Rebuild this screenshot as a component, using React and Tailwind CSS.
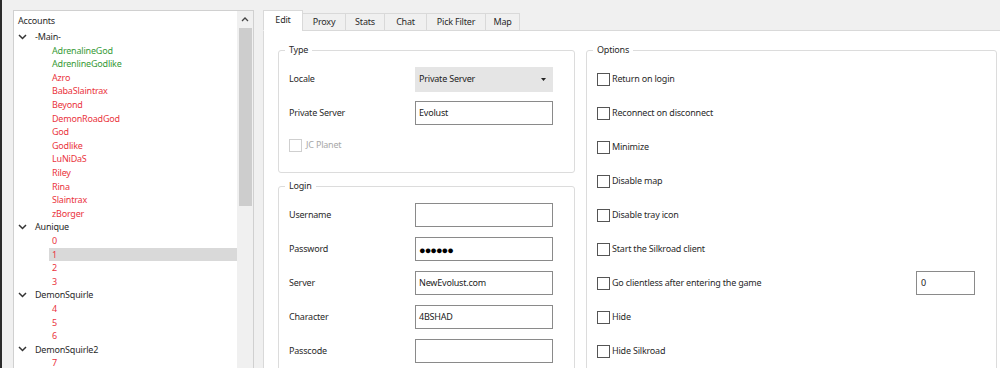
import React from "react";

const tree = [
  { type: "group", label: "-Main-" },
  { label: "AdrenalineGod", c: "g" },
  { label: "AdrenlineGodlike", c: "g" },
  { label: "Azro" },
  { label: "BabaSlaintrax" },
  { label: "Beyond" },
  { label: "DemonRoadGod" },
  { label: "God" },
  { label: "Godlike" },
  { label: "LuNiDaS" },
  { label: "Riley" },
  { label: "Rina" },
  { label: "Slaintrax" },
  { label: "zBorger" },
  { type: "group", label: "Aunique" },
  { label: "0" },
  { label: "1", sel: true },
  { label: "2" },
  { label: "3" },
  { type: "group", label: "DemonSquirle" },
  { label: "4" },
  { label: "5" },
  { label: "6" },
  { type: "group", label: "DemonSquirle2" },
  { label: "7" },
];

const tabs = [
  { label: "Edit", w: "w-[40px]", sel: true },
  { label: "Proxy", w: "w-[44px]" },
  { label: "Stats", w: "w-[40px]" },
  { label: "Chat", w: "w-[43px]" },
  { label: "Pick Filter", w: "w-[60px]" },
  { label: "Map", w: "w-[35px]" },
];

const options = [
  "Return on login",
  "Reconnect on disconnect",
  "Minimize",
  "Disable map",
  "Disable tray icon",
  "Start the Silkroad client",
  "Go clientless after entering the game",
  "Hide",
  "Hide Silkroad",
];

function Chevron() {
  return (
    <svg width="9" height="6" viewBox="0 0 9 6" className="block">
      <path d="M1 1 L4.5 4.5 L8 1" fill="none" stroke="#333" strokeWidth="1.5" />
    </svg>
  );
}

function Box({ disabled }) {
  return (
    <span
      className={
        "inline-block w-[13px] h-[13px] border bg-white shrink-0 " +
        (disabled ? "border-[#cfcfcf]" : "border-[#555]")
      }
    />
  );
}

function Input({ value, password }) {
  return (
    <div className="w-[138px] h-[24px] border border-[#8a8a8a] bg-white flex items-center px-[3px] text-[#222]">
      {password ? (
        <span className="text-[11px] tracking-[-1px] leading-none text-black">●●●●●●</span>
      ) : (
        value
      )}
    </div>
  );
}

function Group({ title, children, className = "" }) {
  return (
    <fieldset className={"border border-[#dcdcdc] rounded-[3px] px-[10px] " + className}>
      <legend className="-ml-[4px] px-[4px] leading-[14px] text-[#2a2a2a]">{title}</legend>
      {children}
    </fieldset>
  );
}

function Row({ label, children }) {
  return (
    <div className="flex items-center h-[34px]">
      <div className="w-[126px] text-[#2a2a2a]">{label}</div>
      {children}
    </div>
  );
}

export default function App() {
  return (
    <div className="flex w-[1000px] h-[368px] overflow-hidden bg-[#f0f0f0] font-['Noto_Sans',sans-serif] text-[9px] tracking-[-0.2px] text-[#2a2a2a]">
      <div className="w-[2px] bg-[#2b2b2b] shrink-0" />
      {/* Accounts */}
      <div className="w-[261px] shrink-0 pl-[11px] pr-[9px] pt-[10px]">
        <div className="flex h-[400px] border border-[#d0d0d0] bg-white">
          <div className="flex-1 flex flex-col">
            <div className="h-[19px] pl-[4px] flex items-center">Accounts</div>
            {tree.map((r, i) =>
              r.type === "group" ? (
                <div key={i} className="h-[13.6px] flex items-center">
                  <span className="w-[21px] pl-[4px] flex items-center">
                    <Chevron />
                  </span>
                  <span>{r.label}</span>
                </div>
              ) : (
                <div key={i} className="h-[13.6px] flex items-center pl-[35px]">
                  <span
                    className={
                      "flex-1 h-full flex items-center pl-[3px] " +
                      (r.sel ? "bg-[#d9d9d9] " : "") +
                      (r.c === "g" ? "text-[#379a37]" : "text-[#ea3440]")
                    }
                  >
                    {r.label}
                  </span>
                </div>
              )
            )}
          </div>
          <div className="w-[16px] bg-[#f0f0f0] flex flex-col items-center">
            <div className="h-[17px] flex items-center justify-center">
              <svg width="8" height="5" viewBox="0 0 8 5">
                <path d="M1 4 L4 1 L7 4" fill="none" stroke="#444" strokeWidth="1.3" />
              </svg>
            </div>
            <div className="w-[13px] h-[178px] bg-[#cdcdcd]" />
          </div>
        </div>
      </div>
      {/* Right side */}
      <div className="flex-1 flex flex-col pt-[10px]">
        <div className="flex items-end h-[21px] relative z-10">
          {tabs.map((t, i) => (
            <div
              key={t.label}
              className={
                t.w +
                " flex items-center justify-center border border-[#d9d9d9] " +
                (i > 0 ? "-ml-px " : "") +
                (t.sel ? "h-[21px] bg-white border-b-white pb-[2px]" : "h-[18px] bg-[#f0f0f0] border-b-[#d9d9d9]")
              }
            >
              {t.label}
            </div>
          ))}
        </div>
        <div className="flex-1 -mt-px bg-white border-t border-l border-[#d9d9d9] flex gap-[11px] pl-[14px] pt-[12px]">
          <div className="w-[297px] flex flex-col gap-[6px]">
            <Group title="Type" className="pt-[5px] pb-[12px]">
              <Row label="Locale">
                <div className="w-[138px] h-[25px] bg-[#e5e5e5] flex items-center pl-[4px] pr-[7px] text-[#222]">
                  <span className="flex-1">Private Server</span>
                  <svg width="5" height="3" viewBox="0 0 5 3">
                    <path d="M0 0 L5 0 L2.5 3 Z" fill="#222" />
                  </svg>
                </div>
              </Row>
              <Row label="Private Server">
                <Input value="Evolust" />
              </Row>
              <div className="flex items-center h-[30px] gap-[4px] text-[#a8a8a8]">
                <Box disabled />
                <span>JC Planet</span>
              </div>
            </Group>
            <Group title="Login" className="pt-[5px] pb-[5px]">
              <Row label="Username">
                <Input value="" />
              </Row>
              <Row label="Password">
                <Input password />
              </Row>
              <Row label="Server">
                <Input value="NewEvolust.com" />
              </Row>
              <Row label="Character">
                <Input value="4BSHAD" />
              </Row>
              <Row label="Passcode">
                <Input value="" />
              </Row>
            </Group>
          </div>
          <div className="w-[411px]">
            <Group title="Options" className="pt-[5px] pb-[5px]">
              {options.map((o) => (
                <div key={o} className="flex items-center h-[34px] gap-[2px]">
                  <Box />
                  <span className="flex-1">{o}</span>
                  {o.startsWith("Go clientless") && (
                    <div className="w-[59px] h-[24px] border border-[#8a8a8a] flex items-center px-[4px] mr-[11px] text-[#222]">
                      0
                    </div>
                  )}
                </div>
              ))}
            </Group>
          </div>
        </div>
      </div>
    </div>
  );
}
